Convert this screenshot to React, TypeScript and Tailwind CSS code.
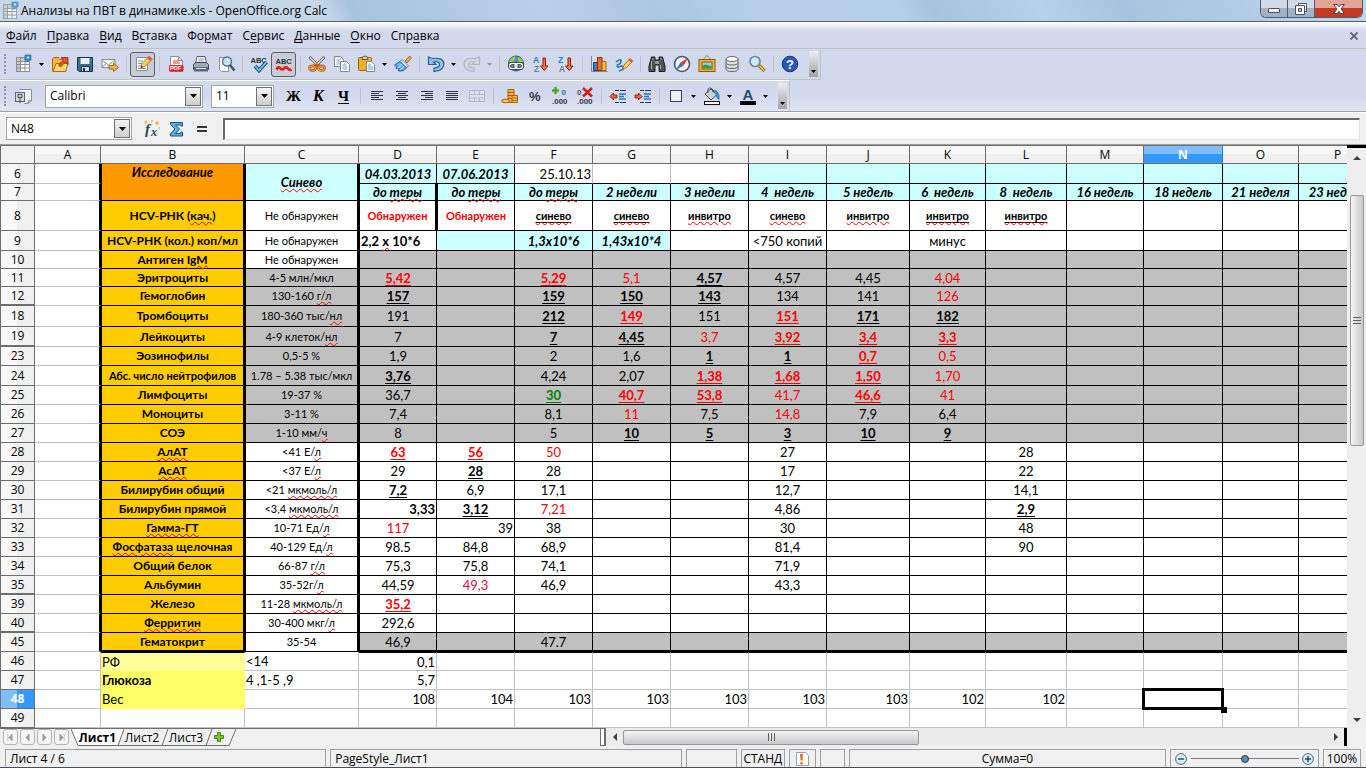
import { useState } from "react";
import type { ReactNode } from "react";
import clsx from "clsx";

const columns = [
  { name: "A", width: "w-[66px]" },
  { name: "B", width: "w-[144px]" },
  { name: "C", width: "w-[114px]" },
  { name: "D", width: "w-[78px]" },
  { name: "E", width: "w-[78px]" },
  { name: "F", width: "w-[78px]" },
  { name: "G", width: "w-[78px]" },
  { name: "H", width: "w-[78px]" },
  { name: "I", width: "w-[78px]" },
  { name: "J", width: "w-[83px]" },
  { name: "K", width: "w-[76px]" },
  { name: "L", width: "w-[81px]" },
  { name: "M", width: "w-[77px]" },
  { name: "N", width: "w-[79px]" },
  { name: "O", width: "w-[76px]" },
  { name: "P", width: "w-auto" },
];

type Row = {
  n: number;
  h: string;
  b?: string;
  c?: string;
  cells: string[];
};

// A cell is "flags|text": b bold, i italic, u underline, r red, m crimson, g green,
// s small, R right, L left. Words between ~ are marked by the spell checker.
const rows: Row[] = [
  { n: 6, h: "h-5", cells: ["bi|04.03.2013", "bi|07.06.2013", "R|25.10.13"] },
  {
    n: 7,
    h: "h-[17px]",
    cells: ["bi|до ~теры~", "bi|до ~теры~", "bi|до ~теры~", "bi|2 недели", "bi|3 недели", "bi|4  недель", "bi|5 недель", "bi|6  недель", "bi|8  недель", "bi|16 недель", "bi|18 недель", "bi|21 неделя", "bi|23 недель"],
  },
  {
    n: 8,
    h: "h-[30px]",
    b: "HCV-РНК (~кач.~)",
    c: "Не обнаружен",
    cells: ["brs|Обнаружен", "brs|Обнаружен", "bus|~синево~", "bus|~синево~", "bs|~инвитро~", "bs|~синево~", "bs|~инвитро~", "bus|~инвитро~", "bus|~инвитро~"],
  },
  { n: 9, h: "h-5", b: "HCV-РНК (кол.) коп/мл", c: "Не обнаружен", cells: ["bL|2,2 ~х~ 10*6", "", "bi|1,3х10*6", "bi|1,43х10*4", "", "|<750 копий", "", "|минус"] },
  { n: 10, h: "h-[18px]", b: "Антиген ~IgM~", c: "Не обнаружен", cells: [] },
  { n: 11, h: "h-[18px]", b: "Эритроциты", c: "4-5 млн/мкл", cells: ["bur|5,42", "", "bur|5,29", "r|5,1", "bu|4,57", "|4,57", "|4,45", "r|4,04"] },
  { n: 12, h: "h-[19px]", b: "Гемоглобин", c: "130-160 ~г/л~", cells: ["bu|157", "", "bu|159", "bu|150", "bu|143", "|134", "|141", "r|126"] },
  { n: 18, h: "h-[21px]", b: "Тромбоциты", c: "180-360 тыс/~нл~", cells: ["|191", "", "bu|212", "bur|149", "|151", "bur|151", "bu|171", "bu|182"] },
  { n: 19, h: "h-5", b: "Лейкоциты", c: "4-9 клеток/~нл~", cells: ["|7", "", "bu|7", "bu|4,45", "r|3,7", "bur|3,92", "bur|3,4", "bur|3,3"] },
  { n: 23, h: "h-[19px]", b: "Эозинофилы", c: "0,5-5 %", cells: ["|1,9", "", "|2", "|1,6", "bu|1", "bu|1", "bur|0,7", "r|0,5"] },
  { n: 24, h: "h-5", b: "Абс. число нейтрофилов", c: "1.78 – 5.38 тыс/мкл", cells: ["bu|3,76", "", "|4,24", "|2,07", "bur|1,38", "bur|1,68", "bur|1,50", "r|1,70"] },
  { n: 25, h: "h-[19px]", b: "Лимфоциты", c: "19-37 %", cells: ["|36,7", "", "bug|30", "bur|40,7", "bur|53,8", "r|41,7", "bur|46,6", "r|41"] },
  { n: 26, h: "h-[19px]", b: "Моноциты", c: "3-11 %", cells: ["|7,4", "", "|8,1", "r|11", "|7,5", "r|14,8", "|7,9", "|6,4"] },
  { n: 27, h: "h-[19px]", b: "СОЭ", c: "1-10 мм/~ч~", cells: ["|8", "", "|5", "bu|10", "bu|5", "bu|3", "bu|10", "bu|9"] },
  { n: 28, h: "h-[19px]", b: "~АлАТ~", c: "<41 Е/~л~", cells: ["bur|63", "bur|56", "r|50", "", "", "|27", "", "", "|28"] },
  { n: 29, h: "h-[19px]", b: "~АсАТ~", c: "<37 Е/~л~", cells: ["|29", "bu|28", "|28", "", "", "|17", "", "", "|22"] },
  { n: 30, h: "h-[19px]", b: "Билирубин общий", c: "<21 ~мкмоль/л~", cells: ["bu|7,2", "|6,9", "|17,1", "", "", "|12,7", "", "", "|14,1"] },
  { n: 31, h: "h-[19px]", b: "Билирубин прямой", c: "<3,4 ~мкмоль/л~", cells: ["bR|3,33", "bu|3,12", "r|7,21", "", "", "|4,86", "", "", "bu|2,9"] },
  { n: 32, h: "h-[19px]", b: "~Гамма-ГТ~", c: "10-71 Ед/~л~", cells: ["r|117", "R|39", "|38", "", "", "|30", "", "", "|48"] },
  { n: 33, h: "h-[19px]", b: "~Фосфатаза~ щелочная", c: "40-129 Ед/~л~", cells: ["|98.5", "|84,8", "|68,9", "", "", "|81,4", "", "", "|90"] },
  { n: 34, h: "h-[19px]", b: "Общий белок", c: "66-87 ~г/л~", cells: ["|75,3", "|75,8", "|74,1", "", "", "|71,9"] },
  { n: 35, h: "h-[19px]", b: "Альбумин", c: "35-52г/~л~", cells: ["|44,59", "m|49,3", "|46,9", "", "", "|43,3"] },
  { n: 39, h: "h-[19px]", b: "Железо", c: "11-28 ~мкмоль/л~", cells: ["bur|35,2"] },
  { n: 40, h: "h-[19px]", b: "~Ферритин~", c: "30-400 мкг/~л~", cells: ["|292,6"] },
  { n: 45, h: "h-[19px]", b: "Гематокрит", c: "35-54", cells: ["|46,9", "", "|47.7"] },
  { n: 46, h: "h-[19px]", b: "L|РФ", c: "L|<14", cells: ["R|0,1"] },
  { n: 47, h: "h-[19px]", b: "bL|Глюкоза", c: "L|4 ,1-5 ,9", cells: ["R|5,7"] },
  { n: 48, h: "h-[19px]", b: "L|Вес", c: "", cells: ["R|108", "R|104", "R|103", "R|103", "R|103", "R|103", "R|103", "R|102", "R|102"] },
  { n: 49, h: "h-[19px]", cells: [] },
];

// rows followed by hidden ones get a thicker header line
const beforeHidden = [12, 19, 35, 40];

const Marked = ({ text }: { text: string }) => (
  <>
    {text.split("~").map((part, i) =>
      i % 2 ? (
        <span key={i} className="underline decoration-[#ff0000] decoration-wavy decoration-1 underline-offset-1">
          {part}
        </span>
      ) : (
        part
      ),
    )}
  </>
);

const background = (n: number, col: number) => {
  if (col === 1) {
    if (n === 46) return "bg-[#ffff99]";
    if (n === 47 || n === 48) return "bg-[#ffff66]";
    if (n < 8) return "bg-[#ff9900]";
    if (n < 46) return "bg-[#ffcc00]";
  }
  if (col === 2) {
    if (n < 8) return "bg-[#ccffff]";
    return n > 10 && n < 28 ? "bg-[#c0c0c0]" : "bg-white";
  }
  if (col > 2) {
    if (n === 6) return col > 4 && col < 8 ? "bg-white" : "bg-[#ccffff]";
    if (n === 7 || (n === 9 && col > 3 && col < 7)) return "bg-[#ccffff]";
    if ((n > 9 && n < 28) || n === 45) return "bg-[#c0c0c0]";
  }
  return "bg-white";
};

const borders = (n: number, col: number) => {
  const black = "border-b-black border-l-black border-t-black";
  if (n > 45) {
    if (col === 1 && n < 49) return clsx("border-r border-b border-transparent", n === 46 && "border-t border-t-black");
    return clsx("border-r border-b border-[#c0c0c0]", n === 46 && col > 2 && "border-t border-t-black");
  }
  if (col === 0) return "border-b border-b-[#c0c0c0] border-r-2 border-r-black";
  const thickRight = col < 3 || (col === 3 && (n === 7 || n === 8));
  const thickLeft = col < 4 || (col === 4 && (n === 7 || n === 8));
  return clsx(
    black,
    n === 6 && (col === 5 || col === 6) ? "border-r-[#c0c0c0]" : "border-r-black",
    thickRight ? "border-r-2" : "border-r",
    thickLeft && "border-l",
    n === 45 && col !== 2 ? "border-b-2" : "border-b",
  );
};

const SheetCell = ({ value = "", n, col, rowSpan, selected, align = "align-middle" }: {
  value?: string;
  n: number;
  col: number;
  rowSpan?: number;
  selected?: boolean;
  align?: string;
}) => {
  const [flags, text] = value.includes("|") ? value.split("|") : ["", value];
  const has = (f: string) => flags.includes(f);
  const label = (col === 1 || col === 2) && n > 7 && n < 46;
  return (
    <td
      rowSpan={rowSpan}
      className={clsx(
        "p-0 whitespace-pre",
        align,
        background(n, col),
        borders(n, col),
        has("R") ? "pr-px text-right" : has("L") ? "pl-px text-left" : "text-center",
        (has("b") || (label && col === 1)) && "font-bold",
        has("i") && "italic",
        has("u") && "underline underline-offset-2",
        has("r") && "text-[#ff0000]",
        has("m") && "text-[#dd0844]",
        has("g") && "text-[#008000]",
        has("s") || (label && col === 2) || (n === 24 && col === 1) ? "text-[11px]" : label ? "text-[12px]" : "text-[13px]",
        selected && "relative",
      )}
    >
      <Marked text={text} />
      {selected && (
        <>
          <span className="absolute -inset-0.5 border-3 border-black" />
          <span className="absolute -right-[5px] -bottom-[5px] size-1.5 bg-black" />
        </>
      )}
    </td>
  );
};

const Sheet = () => {
  const [active, setActive] = useState({ n: 48, col: 13 });
  return (
    <table
      className="w-full min-w-[1377px] table-fixed border-separate border-spacing-0 font-[Lato,Carlito,sans-serif] leading-4 text-black"
      onClick={(e) => {
        const cell = (e.target as HTMLElement).closest("td");
        const n = Number(cell?.parentElement?.dataset.row);
        if (cell && n > 7) setActive({ n, col: cell.cellIndex - 1 });
      }}
    >
      <colgroup>
        <col className="w-[35px]" />
        {columns.map((c) => (
          <col key={c.name} className={c.width} />
        ))}
      </colgroup>
      <thead className="font-['Open_Sans',sans-serif] text-[12px]">
        <tr className="h-[19px]">
          <th className="border border-[#6e6e6e] bg-[#f3f3f3] p-0" />
          {columns.map((c, i) => (
            <th
              key={c.name}
              scope="col"
              className={clsx(
                "border-y border-r p-0",
                i === active.col
                  ? "border-x-[#1c7ae0] border-y-[#6e6e6e] bg-linear-to-b from-[#80bdff] from-50% to-[#3399ff] to-50% font-bold text-white"
                  : "border-[#6e6e6e] bg-linear-to-b from-[#f8f8f8] from-50% to-[#f0f0f0] to-50% font-normal",
              )}
            >
              {c.name}
            </th>
          ))}
        </tr>
      </thead>
      <tbody>
        {rows.map((row) => (
          <tr key={row.n} data-row={row.n} className={row.h}>
            <th
              scope="row"
              className={clsx(
                "border-x border-[#6e6e6e] p-0 font-['Open_Sans',sans-serif] text-[12px]",
                beforeHidden.includes(row.n) ? "border-b-2" : "border-b",
                row.n === active.n
                  ? "bg-linear-to-r from-[#80bdff] from-50% to-[#3399ff] to-50% font-bold text-white"
                  : "bg-linear-to-r from-[#f8f8f8] from-50% to-[#f0f0f0] to-50% font-normal",
              )}
            >
              {row.n}
            </th>
            <SheetCell n={row.n} col={0} />
            {row.n === 6 && (
              <>
                <SheetCell n={6} col={1} rowSpan={2} value="bi|Исследование" align="align-top" />
                <SheetCell n={6} col={2} rowSpan={2} value="bi|~Синево~" />
              </>
            )}
            {row.n > 7 && (
              <>
                <SheetCell n={row.n} col={1} value={row.b} selected={active.n === row.n && active.col === 1} />
                <SheetCell n={row.n} col={2} value={row.c} selected={active.n === row.n && active.col === 2} />
              </>
            )}
            {columns.slice(3).map((c, i) => (
              <SheetCell
                key={c.name}
                n={row.n}
                col={i + 3}
                value={row.cells[i]}
                selected={active.n === row.n && active.col === i + 3}
              />
            ))}
          </tr>
        ))}
      </tbody>
    </table>
  );
};

/* ---------- icons, drawn on a 20x20 field ---------- */

const Svg = ({ children }: { children: ReactNode }) => (
  <svg viewBox="0 0 20 20" className="size-5 shrink-0" fill="none" aria-hidden="true">
    {children}
  </svg>
);

const SvgText = ({ x, y, size, fill, children }: { x: number; y: number; size: number; fill: string; children: string }) => (
  <text x={x} y={y} fontSize={size} fill={fill} fontFamily="Liberation Sans, sans-serif" fontWeight="bold">
    {children}
  </text>
);

const GridIcon = () => (
  <Svg>
    <rect x="2.500" y="3.500" width="13" height="14" fill="#fff" stroke="#8d8d8d" />
    <path d="M3 4h12v3H3zM3 7h3v10H3z" fill="#c4c9ce" />
    <path d="M2.500 7.500h13M2.500 10.500h13M2.500 14h13M6.500 3.500v14M11 3.500v14" stroke="#8d8d8d" />
    <path d="M11 1h6v5h-2l-2 2.500V6h-2z" fill="#3d8fd1" stroke="#1c68a8" strokeWidth=".7" />
    <circle cx="14" cy="3.500" r="1" fill="#fff" />
  </Svg>
);

const OpenIcon = () => (
  <Svg>
    <path d="M2.500 17V4.500l1-1h5l1 2H16V17z" fill="#f5b73c" stroke="#b3661a" />
    <path d="M3 17.500 6 9.500h12l-2.500 8z" fill="#ffdf75" stroke="#b3661a" />
    <path d="m8.500 11 5-5L11 3.500h7v7L15.500 8l-5 5z" fill="#e4572a" stroke="#8e1f0c" strokeWidth=".8" />
  </Svg>
);

const SaveIcon = () => (
  <Svg>
    <path d="M2.500 3.500h15v14H4l-1.500-1.500z" fill="#39708f" stroke="#153447" />
    <path d="M5.500 4h9v6h-9z" fill="#e9f0f4" />
    <path d="M6.500 12.500h8v5h-8z" fill="#cfd9df" stroke="#153447" />
    <path d="M8 14h2v3H8z" fill="#153447" />
  </Svg>
);

const MailIcon = () => (
  <Svg>
    <path d="M2 5.500h13v8H2z" fill="#f7f7f7" stroke="#8b8f94" />
    <path d="m2 6 6.500 5L15 6M2 13l4.500-3.500" stroke="#8b8f94" />
    <path d="M9 11.500h4.500V9l5 4.500-5 4V15H9z" fill="#f7b53b" stroke="#9a5f10" strokeWidth=".9" />
  </Svg>
);

const EditIcon = () => (
  <Svg>
    <path d="M3.500 3.500h11v13h-11z" fill="#fff" stroke="#8b8f94" />
    <path d="M5 7h5M5 9.500h4M5 12h3M5 14.500h8" stroke="#5f8fb0" />
    <path d="m8 13.500 1-4 7-7 3 3-7 7z" fill="#ffd54a" stroke="#a6651a" strokeWidth=".9" />
    <path d="m14 4.500 2.500-2.500 2.500 3-2 2z" fill="#e8544a" />
    <path d="m8 13.500.5-2 1.500 1.500z" fill="#222" />
  </Svg>
);

const PdfIcon = () => (
  <Svg>
    <path d="M4.500 2.500h8l4 4v11h-12z" fill="#fff" stroke="#8b8f94" />
    <path d="M12.500 2.500v4h4" stroke="#8b8f94" />
    <path d="M7 7h6M7 9h7" stroke="#d23b36" />
    <rect x="3" y="11" width="14.500" height="6.500" rx="1" fill="#dd2420" />
    <SvgText x={4} y={16.300} size={5.800} fill="#fff">PDF</SvgText>
  </Svg>
);

const PrintIcon = () => (
  <Svg>
    <path d="M6 2.500h8l1.500 7H4.500z" fill="#fff" stroke="#4f5f6b" />
    <path d="M7 5h6M7 7h6" stroke="#90a0ac" />
    <path d="M2.500 10.500 4.500 8.500h11l2 2v5h-15z" fill="#9fabb5" stroke="#3c4a55" />
    <path d="M3 13h14v4.500H3z" fill="#5c6a75" />
    <path d="M5 14.500h10" stroke="#dfe6eb" />
  </Svg>
);

const PreviewIcon = () => (
  <Svg>
    <path d="M3.500 3.500h9v14h-7l-2-2z" fill="#fff" stroke="#8b8f94" />
    <circle cx="11" cy="7.500" r="4.500" fill="#cbe4f6" stroke="#56788e" strokeWidth="1.500" />
    <path d="m14 11 4.500 5.500" stroke="#3b5566" strokeWidth="2.500" />
  </Svg>
);

const SpellIcon = () => (
  <Svg>
    <SvgText x={1.500} y={8.500} size={7.500} fill="#26343d">ABC</SvgText>
    <path d="m6 12 4 4.500L17.500 8" stroke="#1b4f80" strokeWidth="3.800" />
    <path d="m6 12 4 4.500L17.500 8" stroke="#7cc0f2" strokeWidth="1.800" />
  </Svg>
);

const AutoSpellIcon = () => (
  <Svg>
    <SvgText x={1.500} y={10} size={7.500} fill="#26343d">ABC</SvgText>
    <path d="M2.500 15.500q1.800-3.500 3.800-1.200t3.700 0 3.700 0 3.800 1.200" stroke="#e0231c" strokeWidth="2.800" />
  </Svg>
);

const CutIcon = () => (
  <Svg>
    <path d="m2.500 3 9.500 9.500M17.500 3 8 12.500" stroke="#555" strokeWidth="2.600" />
    <path d="m3 3.500 8.500 8.500M17 3.500 8.500 12" stroke="#e4e4e4" strokeWidth="1.200" />
    <path d="m10 10.500-3.500 2M10 10.500l3.500 2" stroke="#c75a12" strokeWidth="3" />
    <ellipse cx="5.500" cy="14.200" rx="3" ry="2.300" stroke="#b9500d" strokeWidth="2.600" />
    <ellipse cx="14.500" cy="14.200" rx="3" ry="2.300" stroke="#b9500d" strokeWidth="2.600" />
    <ellipse cx="5.500" cy="14.200" rx="3" ry="2.300" stroke="#f39a34" strokeWidth="1.200" />
    <ellipse cx="14.500" cy="14.200" rx="3" ry="2.300" stroke="#f39a34" strokeWidth="1.200" />
  </Svg>
);

const CopyIcon = () => (
  <Svg>
    <path d="M2.500 2.500h6l3 3v7h-9z" fill="#fff" stroke="#7c8790" />
    <path d="M4.500 6h4M4.500 8h5M4.500 10h5" stroke="#6e9fc4" />
    <path d="M8.500 7.500h6l3 3v7h-9z" fill="#fff" stroke="#7c8790" />
    <path d="M10.500 11h4M10.500 13h5M10.500 15h5" stroke="#6e9fc4" />
  </Svg>
);

const PasteIcon = () => (
  <Svg>
    <rect x="1.500" y="3.500" width="13" height="13" rx="1" fill="#eeb02a" stroke="#9c6412" />
    <path d="M5 5.500q0-3.500 3-3.500t3 3.500z" fill="#d9d3b8" stroke="#6b5a2a" />
    <path d="M9.500 7.500h5l3 3v7h-8z" fill="#fff" stroke="#7c8790" />
    <path d="M11 11h3M11 13h5M11 15h5" stroke="#6e9fc4" />
  </Svg>
);

const BrushIcon = () => (
  <Svg>
    <path d="m12 7 4.500-5 2 2L14 9z" fill="#f3a64a" stroke="#94571a" strokeWidth=".8" />
    <path d="m9 5.500 6.500 6.500-2 2L7 7.500z" fill="#d7ebf8" stroke="#3d6b8c" strokeWidth=".8" />
    <path d="M7 7.500 1.500 11q1 1.500 2.500 1l-1 2.500q1.500.5 3 0L5.500 17q5 1 8-3z" fill="#6bb1ea" stroke="#1f5f9c" strokeWidth=".9" />
    <path d="M9 10 4.500 14M11 12l-3.500 3.500" stroke="#dff0fc" strokeWidth=".8" />
  </Svg>
);

const UndoIcon = ({ faded }: { faded?: boolean }) => (
  <Svg>
    <g transform={faded ? "translate(20 0) scale(-1 1)" : undefined}>
      <path
        d="M2.500 3v7.500H10L7.500 8q5-1.500 6 2 .5 3.500-5.500 4v3.500q9.500-.5 10-7.500-.8-7-10.500-5.500L5 4z"
        fill={faded ? "#d3d7e2" : "#8cc0e0"}
        stroke={faded ? "#b2b6c2" : "#2b6285"}
        strokeWidth="1.200"
      />
    </g>
  </Svg>
);

const LinkIcon = () => (
  <Svg>
    <circle cx="10" cy="9.500" r="7.500" fill="#4b93cc" stroke="#235b85" />
    <path d="M3.500 7q2.500-5 6-4.500l-.5 3-3 3-2.500.5zM12 3q4 1 5 5l-3 1-2-3z" fill="#a5c93a" />
    <rect x="3.500" y="9.500" width="7.500" height="5" rx="2.500" stroke="#222" strokeWidth="2.800" />
    <rect x="9" y="9.500" width="7.500" height="5" rx="2.500" stroke="#222" strokeWidth="2.800" />
    <rect x="3.500" y="9.500" width="7.500" height="5" rx="2.500" stroke="#f4f4f4" strokeWidth="1.400" />
    <rect x="9" y="9.500" width="7.500" height="5" rx="2.500" stroke="#f4f4f4" strokeWidth="1.400" />
  </Svg>
);

const SortIcon = ({ top, bottom }: { top: string; bottom: string }) => (
  <Svg>
    <SvgText x={2} y={8.500} size={8.500} fill="#1f7fd0">{top}</SvgText>
    <SvgText x={3} y={17.500} size={8.500} fill="#7a7f84">{bottom}</SvgText>
    <path d="M12 4h2.500v8H17l-3.700 4.500L9.500 12H12z" fill="#f5793f" stroke="#8e1f0c" />
  </Svg>
);

const ChartIcon = () => (
  <Svg>
    <path d="M2.500 2v15.500h16" stroke="#7c8790" />
    <path d="M4.500 8.500h4v8h-4z" fill="#3d84b8" stroke="#1d4768" />
    <path d="M8.500 3.500h4.500v13H8.500z" fill="#f06a2a" stroke="#94270c" />
    <path d="M13 7.500h4v9h-4z" fill="#f8c04a" stroke="#a0680f" />
  </Svg>
);

const DrawIcon = () => (
  <Svg>
    <path d="M2 8q5-4 5-1T3.500 11Q2 14 6 12.500T9 15.500L5 17" stroke="#2f77c0" strokeWidth="1.600" />
    <path d="m8.500 15 1.500-4 5.500-6 3 2.500-6 6z" fill="#ffd54a" stroke="#a6651a" strokeWidth=".9" />
    <path d="m14.500 6 1.500-2 3 2.500-1.500 2z" fill="#e8544a" />
  </Svg>
);

const FindIcon = () => (
  <Svg>
    <path d="M4.500 3h3.500v3h4V3h3.500l2.500 9v5.500h-6V11H8v6.500H2V12z" fill="#4c5257" stroke="#1c1f22" />
    <path d="M8 7h4v3H8z" fill="#999" />
    <path d="M4.500 7v8M13.500 11v4M6 4v2M14 4v2" stroke="#a9afb4" />
  </Svg>
);

const CompassIcon = () => (
  <Svg>
    <circle cx="10" cy="10" r="7.500" fill="#f4f6f8" stroke="#4a5862" strokeWidth="1.600" />
    <path d="m4.500 4 7 4.500-3 3z" fill="#2e6fc4" opacity="0" />
    <path d="m16 4-4.500 7.500L8.500 8.500z" fill="#e13329" />
    <path d="m4 16 4.500-7.500 3 3z" fill="#2e6fc4" />
  </Svg>
);

const GalleryIcon = () => (
  <Svg>
    <path d="m6 5.500 4-4 4 4" stroke="#9a7a3c" />
    <rect x="2" y="5.500" width="16" height="12" fill="#f1b03c" stroke="#8d5a10" />
    <rect x="5" y="8" width="10" height="7" fill="#8fd0f2" stroke="#8d5a10" />
    <path d="M5.500 14.500v-3q4-2 9 1v2z" fill="#3f9a3d" />
  </Svg>
);

const DatabaseIcon = () => (
  <Svg>
    <path d="M4 5v10q0 2.500 6 2.500t6-2.500V5" fill="#dcdfe1" stroke="#63696f" />
    <ellipse cx="10" cy="5" rx="6" ry="2.500" fill="#fafafa" stroke="#63696f" />
    <path d="M4 8.500q0 2.500 6 2.500t6-2.500M4 12q0 2.500 6 2.500t6-2.500" stroke="#63696f" />
  </Svg>
);

const ZoomIcon = () => (
  <Svg>
    <circle cx="8" cy="7.500" r="5" fill="#cfe9fa" stroke="#6b8aa0" strokeWidth="1.700" />
    <path d="m12 11.500 5.500 5.500" stroke="#9a6a16" strokeWidth="3.400" />
    <path d="m12.500 12 4.500 4.500" stroke="#f3c548" strokeWidth="1.600" />
  </Svg>
);

const HelpIcon = () => (
  <Svg>
    <circle cx="10" cy="10" r="7.800" fill="#2a58b5" stroke="#1a3878" />
    <SvgText x={6} y={14.800} size={13} fill="#fff">?</SvgText>
  </Svg>
);

const StylesIcon = () => (
  <Svg>
    <path d="M5.500 3.500h12v11l-3 3h-4" fill="#f3f4f6" stroke="#8b8f94" />
    <path d="M14.500 17.500v-3h3" stroke="#8b8f94" />
    <rect x="1.500" y="6.500" width="9" height="9" fill="#d6dade" stroke="#5d666e" />
    <path d="M4 8.500h4v3H4zM6 11.500V17" stroke="#3a444c" />
  </Svg>
);

const LinesIcon = ({ d }: { d: string }) => (
  <Svg>
    <path d={d} stroke="#2b3840" strokeWidth="1" />
  </Svg>
);

const MergeIcon = () => (
  <Svg>
    <path d="M2.500 4.500h15v11h-15zM2.500 8.500h15M2.500 12h15M7.500 4.500v4M12.500 4.500v4M7.500 12v3.500M12.500 12v3.500" stroke="#b4b9c4" fill="#dde1ec" />
  </Svg>
);

const CoinsIcon = () => (
  <Svg>
    <path d="M8 3.500h6v13H8z" fill="#f5b53a" stroke="#a9600c" />
    <path d="M8 6.500h6M8 9.500h6M8 12.500h6" stroke="#a9600c" />
    <path d="M12 9.500h5.500v7H12z" fill="#f8c55a" stroke="#a9600c" />
    <path d="M12 12h5.500M12 14.500h5.500" stroke="#a9600c" />
    <ellipse cx="5.500" cy="15" rx="4" ry="1.800" fill="#f8c55a" stroke="#a9600c" />
  </Svg>
);

const PercentIcon = () => (
  <Svg>
    <SvgText x={4} y={14.500} size={13} fill="#2e3c46">%</SvgText>
  </Svg>
);

const DecimalIcon = ({ remove }: { remove?: boolean }) => (
  <Svg>
    <SvgText x={remove ? 2 : 11.500} y={8.500} size={8} fill={remove ? "#4c5a64" : "#2376c8"}>0</SvgText>
    <SvgText x={2} y={18} size={8} fill="#2e3c46">.000</SvgText>
    {remove ? (
      <path d="m8 2 9 8.500M17 2l-9 8.500" stroke="#d3201b" strokeWidth="2.600" />
    ) : (
      <path d="M5.500 1v7M2 4.500h7" stroke="#4ea81c" strokeWidth="2.400" />
    )}
  </Svg>
);

const IndentIcon = ({ more }: { more?: boolean }) => (
  <Svg>
    <path d="M7 4.500h4m1 0h6M7 16.500h4m1 0h6" stroke="#2b3840" />
    <path d="M11 8h7M11 10.500h5M11 13h7" stroke="#2479ba" strokeWidth="1.700" />
    <path d={more ? "M9 10.500 5.500 7v2H2v3h3.500v2z" : "M2 10.500 5.500 7v2H9v3H5.500v2z"} fill="#f0643c" stroke="#8e1f0c" strokeWidth=".9" />
  </Svg>
);

const BorderIcon = () => (
  <Svg>
    <rect x="4.500" y="4.500" width="11" height="11" fill="#eef0f8" stroke="#3a444c" />
  </Svg>
);

const BucketIcon = () => (
  <Svg>
    <path d="m3 8 6-5 6 5.500-6 5.500z" fill="#cdd4d9" stroke="#3f4a52" />
    <path d="M6 7q-1-5.500 3-5 2 .500 2 4.500" stroke="#3f4a52" />
    <path d="M11 4.500q7-.5 6 9-2.500-1-3-5z" fill="#3d9ad8" stroke="#1d6494" strokeWidth=".7" />
    <rect x="2.500" y="15.500" width="15" height="3" fill="#fff" stroke="#111" />
  </Svg>
);

const FontColorIcon = () => (
  <Svg>
    <SvgText x={4.500} y={13.500} size={15} fill="#1e4d70">A</SvgText>
    <rect x="2" y="15" width="16" height="4" fill="#000" />
  </Svg>
);

const FunctionIcon = () => (
  <Svg>
    <text x="3" y="15" fontSize="15" fontStyle="italic" fontWeight="bold" fontFamily="Liberation Serif, serif" fill="#2d4656">f</text>
    <text x="9" y="16.500" fontSize="12" fontStyle="italic" fontWeight="bold" fontFamily="Liberation Serif, serif" fill="#2d4656">x</text>
    <path d="M4 1.500v3M2.500 3h3M15 2v4M13 4h4M10 1v2M17 8v2" stroke="#f0b92c" strokeWidth="1.300" />
  </Svg>
);

const SumIcon = () => (
  <Svg>
    <path d="M3.500 3.500h12v3.500H14L13.500 6H8.500l4 4-4 4.500h5l.5-1.500h1.500v4h-12v-2L8 10 3.500 5.500z" fill="#5eb0e4" stroke="#135683" />
  </Svg>
);

const DocAlertIcon = () => (
  <Svg>
    <path d="M4.500 3.500h9l3 3v10h-12z" fill="#fff" stroke="#9aa0a6" />
    <path d="M8 5h3l-.5 6.500h-2zM8.300 13h2.400v2.400H8.300z" fill="#e8721c" />
  </Svg>
);

/* ---------- chrome ---------- */

const ToolButton = ({ label, pressed, children }: { label: string; pressed?: boolean; children: ReactNode }) => (
  <button
    type="button"
    aria-label={label}
    aria-pressed={pressed}
    className={clsx(
      "flex h-[25px] w-[25px] shrink-0 items-center justify-center rounded-[3px]",
      pressed && "border border-[#5b5f68] bg-[#c9cbd6]",
    )}>
    {children}
  </button>
);

const Caret = ({ faded }: { faded?: boolean }) => (
  <svg viewBox="0 0 5 3" className={clsx("h-[3px] w-[5px] shrink-0", faded ? "fill-[#9a9aa0]" : "fill-black")} aria-hidden="true">
    <path d="M0 0h5L2.500 3z" />
  </svg>
);

const DropButton = ({ label, faded }: { label: string; faded?: boolean }) => (
  <button type="button" aria-label={label} className="flex h-[25px] w-[11px] shrink-0 items-center justify-center">
    <Caret faded={faded} />
  </button>
);

const Separator = () => (
  <div className="flex w-2 shrink-0 justify-center">
    <div className="h-4 w-px bg-[#bfc0c6]" />
  </div>
);

const Grip = () => <div className="mr-[5px] ml-1 h-5 w-0.5 shrink-0 border-l-2 border-dotted border-[#8f93a3]" />;

const OverflowHandle = () => (
  <button
    type="button"
    aria-label="Ещё"
    className="ml-[7px] flex h-[26px] w-[9px] shrink-0 items-end justify-center bg-linear-to-b from-[#eceef5] to-[#a3a3a6] pb-1"
  >
    <Caret />
  </button>
);

const ComboBox = ({ label, value, className }: { label: string; value: string; className: string }) => (
  <div className={clsx("flex h-[23px] shrink-0 items-center border border-[#a0a3ad] bg-white p-px", className)}>
    <input aria-label={label} defaultValue={value} className="min-w-0 flex-1 bg-transparent pl-[3px] text-[12px] outline-none" />
    <button
      type="button"
      aria-label={`${label}: список`}
      className="flex h-[19px] w-4 shrink-0 items-center justify-center border border-[#707070] bg-linear-to-b from-[#f2f2f2] to-[#cfcfcf]"
    >
      <svg viewBox="0 0 7 4" className="h-1 w-[7px] fill-black" aria-hidden="true">
        <path d="M0 0h7L3.500 4z" />
      </svg>
    </button>
  </div>
);

const TitleBar = () => (
  <header className="flex h-[22px] shrink-0 items-start justify-between border-b border-[#56606e] bg-[linear-gradient(60deg,#c9d8e8_0%,#c5d6e9_24%,#a9c3de_26%,#b9d0e8_40%,#adc6e1_48%,#b7d0e8_56%,#b6cfe8_66%,#a9c2dd_68%,#b8d1ea_76%,#a8c3df_82%,#c0d6ec_100%)]">
    <div className="flex items-center pl-px">
      <span className="opacity-70">
        <GridIcon />
      </span>
      <h1 className="text-[12px] leading-[22px] whitespace-nowrap">Анализы на ПВТ в динамике.xls - OpenOffice.org Calc</h1>
    </div>
    <div className="mr-[3px] flex h-[18px] overflow-hidden rounded-b-md border border-t-0 border-[#4d5b6b]">
      <button type="button" aria-label="Свернуть" className="flex w-[27px] items-center justify-center border-r border-[#4d5b6b] bg-linear-to-b from-[#cfdbe8] from-45% to-[#a2b1c4] to-50%">
        <span className="mt-1 h-[5px] w-3 rounded-[1px] border border-[#4a5364] bg-white" />
      </button>
      <button type="button" aria-label="Восстановить" className="flex w-[27px] items-center justify-center border-r border-[#4d5b6b] bg-linear-to-b from-[#cfdbe8] from-45% to-[#a2b1c4] to-50%">
        <svg viewBox="0 0 12 12" className="size-3" fill="#fff" stroke="#4a5364" aria-hidden="true">
          <path d="M3.500.500h8v8h-8z" />
          <path d="M.500 2.500h9v9h-9z" />
          <path d="M3.500 5.500h3v3h-3z" fill="#b5c2d2" />
        </svg>
      </button>
      <button type="button" aria-label="Закрыть" className="flex w-[47px] items-center justify-center bg-linear-to-b from-[#e3a597] from-45% to-[#c4391f] to-50%">
        <svg viewBox="0 0 12 10" className="h-2.5 w-3" aria-hidden="true">
          <path d="M.700.500h3.600L6 2.800 7.700.500h3.600L8 5l3.300 4.500H7.700L6 7.200 4.300 9.500H.700L4 5z" fill="#fff" stroke="#4a4450" />
        </svg>
      </button>
    </div>
  </header>
);

const menus = [
  ["", "Ф", "айл"],
  ["", "П", "равка"],
  ["", "В", "ид"],
  ["В", "с", "тавка"],
  ["Фо", "р", "мат"],
  ["С", "е", "рвис"],
  ["", "Д", "анные"],
  ["", "О", "кно"],
  ["Спр", "а", "вка"],
];

const MenuBar = () => (
  <nav className="flex h-[27px] shrink-0 items-center border-b border-[#c3c2bf] bg-linear-to-b from-white to-[#d3d9ec] to-35% pt-0.5 pl-px">
    {menus.map(([before, key, after]) => (
      <button key={before + key + after} type="button" className="px-[5px] text-[12px] leading-5">
        {before}
        <span className="underline underline-offset-2">{key}</span>
        {after}
      </button>
    ))}
    <button type="button" aria-label="Закрыть документ" className="mr-2 ml-auto">
      <svg viewBox="0 0 8 8" className="size-2" stroke="#59616e" strokeWidth="1.800" aria-hidden="true">
        <path d="m.500.500 7 7M7.500.500l-7 7" />
      </svg>
    </button>
  </nav>
);

const StandardToolbar = () => (
  <div className="flex h-[31px] w-[821px] items-center border-r border-b border-[#c3c2bf] border-t-white">
    <Grip />
    <ToolButton label="Создать"><GridIcon /></ToolButton>
    <DropButton label="Создать: список" />
    <ToolButton label="Открыть"><OpenIcon /></ToolButton>
    <ToolButton label="Сохранить"><SaveIcon /></ToolButton>
    <ToolButton label="Отправить по почте"><MailIcon /></ToolButton>
    <Separator />
    <ToolButton label="Правка файла" pressed><EditIcon /></ToolButton>
    <Separator />
    <ToolButton label="Экспорт в PDF"><PdfIcon /></ToolButton>
    <ToolButton label="Печать"><PrintIcon /></ToolButton>
    <ToolButton label="Предварительный просмотр"><PreviewIcon /></ToolButton>
    <Separator />
    <ToolButton label="Проверка орфографии"><SpellIcon /></ToolButton>
    <ToolButton label="Автопроверка орфографии" pressed><AutoSpellIcon /></ToolButton>
    <Separator />
    <ToolButton label="Вырезать"><CutIcon /></ToolButton>
    <ToolButton label="Копировать"><CopyIcon /></ToolButton>
    <ToolButton label="Вставить"><PasteIcon /></ToolButton>
    <DropButton label="Вставить: список" />
    <ToolButton label="Кисть форматирования"><BrushIcon /></ToolButton>
    <Separator />
    <ToolButton label="Отменить"><UndoIcon /></ToolButton>
    <DropButton label="Отменить: список" />
    <ToolButton label="Вернуть"><UndoIcon faded /></ToolButton>
    <DropButton label="Вернуть: список" faded />
    <Separator />
    <ToolButton label="Гиперссылка"><LinkIcon /></ToolButton>
    <ToolButton label="Сортировать по возрастанию"><SortIcon top="A" bottom="Z" /></ToolButton>
    <ToolButton label="Сортировать по убыванию"><SortIcon top="Z" bottom="A" /></ToolButton>
    <Separator />
    <ToolButton label="Диаграмма"><ChartIcon /></ToolButton>
    <ToolButton label="Функции рисования"><DrawIcon /></ToolButton>
    <Separator />
    <ToolButton label="Найти и заменить"><FindIcon /></ToolButton>
    <ToolButton label="Навигатор"><CompassIcon /></ToolButton>
    <ToolButton label="Галерея"><GalleryIcon /></ToolButton>
    <ToolButton label="Источники данных"><DatabaseIcon /></ToolButton>
    <ToolButton label="Масштаб"><ZoomIcon /></ToolButton>
    <Separator />
    <ToolButton label="Справка"><HelpIcon /></ToolButton>
    <OverflowHandle />
  </div>
);

const FormattingToolbar = () => (
  <div className="flex h-[31px] w-[790px] items-center border-t border-r border-[#c3c2bf] border-t-white">
    <Grip />
    <ToolButton label="Стили"><StylesIcon /></ToolButton>
    <ComboBox label="Шрифт" value="Calibri" className="ml-[9px] w-[158px]" />
    <ComboBox label="Размер" value="11" className="mr-[7px] ml-2 w-[63px]" />
    <ToolButton label="Жирный"><span className="font-['Liberation_Serif',serif] text-[15px] font-bold">Ж</span></ToolButton>
    <ToolButton label="Курсив"><span className="font-['Liberation_Serif',serif] text-[16px] font-bold italic">К</span></ToolButton>
    <ToolButton label="Подчёркнутый"><span className="font-['Liberation_Serif',serif] text-[15px] font-bold underline underline-offset-2">Ч</span></ToolButton>
    <Separator />
    <ToolButton label="По левому краю"><LinesIcon d="M4 5.500h12M4 7.500h8M4 9.500h12M4 11.500h8M4 13.500h12" /></ToolButton>
    <ToolButton label="По центру"><LinesIcon d="M4 5.500h12M6 7.500h8M4 9.500h12M6 11.500h8M4 13.500h12" /></ToolButton>
    <ToolButton label="По правому краю"><LinesIcon d="M4 5.500h12M8 7.500h8M4 9.500h12M8 11.500h8M4 13.500h12" /></ToolButton>
    <ToolButton label="По ширине"><LinesIcon d="M4 5.500h12M4 7.500h12M4 9.500h12M4 11.500h12M4 13.500h12" /></ToolButton>
    <ToolButton label="Объединить ячейки"><MergeIcon /></ToolButton>
    <Separator />
    <ToolButton label="Денежный формат"><CoinsIcon /></ToolButton>
    <ToolButton label="Процентный формат"><PercentIcon /></ToolButton>
    <ToolButton label="Добавить разряд"><DecimalIcon /></ToolButton>
    <ToolButton label="Удалить разряд"><DecimalIcon remove /></ToolButton>
    <Separator />
    <ToolButton label="Уменьшить отступ"><IndentIcon /></ToolButton>
    <ToolButton label="Увеличить отступ"><IndentIcon more /></ToolButton>
    <Separator />
    <ToolButton label="Обрамление"><BorderIcon /></ToolButton>
    <DropButton label="Обрамление: список" />
    <ToolButton label="Цвет фона"><BucketIcon /></ToolButton>
    <DropButton label="Цвет фона: список" />
    <ToolButton label="Цвет шрифта"><FontColorIcon /></ToolButton>
    <DropButton label="Цвет шрифта: список" />
    <OverflowHandle />
  </div>
);

const FormulaBar = () => (
  <div className="flex h-[33px] shrink-0 items-center border-t border-b border-[#a0a0a0] border-t-white bg-[#f0f0f0] px-1.5">
    <ComboBox label="Область листа" value="N48" className="mr-[7px] w-[126px]" />
    <ToolButton label="Мастер функций"><FunctionIcon /></ToolButton>
    <ToolButton label="Сумма"><SumIcon /></ToolButton>
    <ToolButton label="Функция"><LinesIcon d="M5 7.500h10M5 8.500h10M5 11.500h10M5 12.500h10" /></ToolButton>
    <input
      aria-label="Строка ввода"
      className="ml-[9px] h-[22px] min-w-0 flex-1 border border-t-2 border-l-2 border-[#e3e3e3] border-t-[#696969] border-l-[#696969] bg-white px-1 text-[12px] outline-none"
    />
  </div>
);

const Arrow = ({ d }: { d: string }) => (
  <svg viewBox="0 0 8 8" className="size-2 fill-[#404040]" aria-hidden="true">
    <path d={d} />
  </svg>
);

const VerticalScroll = () => (
  <div className="flex w-[19px] shrink-0 flex-col items-center border-t-3 border-black bg-[#eeeeee]">
    <button type="button" aria-label="Вверх" className="flex h-[47px] w-full items-start justify-center pt-1.5">
      <Arrow d="M0 6l4-4 4 4z" />
    </button>
    <div className="flex h-[251px] w-3.5 flex-col items-center justify-center gap-0.5 rounded-xs border border-[#979797] bg-linear-to-r from-[#f5f5f5] to-[#c8c8cc]">
      <span className="h-px w-2 bg-[#606060]" />
      <span className="h-px w-2 bg-[#606060]" />
      <span className="h-px w-2 bg-[#606060]" />
    </div>
    <button type="button" aria-label="Вниз" className="mt-auto flex h-4 w-full items-center justify-center">
      <Arrow d="M0 2l4 4 4-4z" />
    </button>
  </div>
);

const HorizontalScroll = () => (
  <div className="flex min-w-0 flex-1 items-center bg-[#ececec]">
    <button type="button" aria-label="Влево" className="flex w-[17px] justify-center">
      <Arrow d="M6 0L2 4l4 4z" />
    </button>
    <div className="flex h-[15px] w-[40%] items-center justify-center gap-0.5 rounded-xs border border-[#979797] bg-linear-to-b from-[#f5f5f5] to-[#c8c8cc]">
      <span className="h-2 w-px bg-[#606060]" />
      <span className="h-2 w-px bg-[#606060]" />
      <span className="h-2 w-px bg-[#606060]" />
    </div>
    <button type="button" aria-label="Вправо" className="ml-auto flex w-[17px] justify-center">
      <Arrow d="M2 0l4 4-4 4z" />
    </button>
    <div className="w-[3px] self-stretch bg-black" />
  </div>
);

const navButtons = [
  { label: "Первый лист", d: "M1 0v8M2 4l4-4v8z" },
  { label: "Предыдущий лист", d: "M2 4l4-4v8z" },
  { label: "Следующий лист", d: "M6 4L2 0v8z" },
  { label: "Последний лист", d: "M6 4L2 0v8zM7 0v8" },
];

const SheetTab = ({ name, active, onClick }: { name: string; active: boolean; onClick: () => void }) => (
  <button
    type="button"
    onClick={onClick}
    className={clsx("relative h-[17px] shrink-0 text-[12px] leading-4", active ? "z-10 w-[53px] font-bold" : "w-11 pr-2")}
  >
    {active ? (
      <svg viewBox="0 0 53 17" className="absolute inset-0 h-[17px] w-[53px]" aria-hidden="true">
        <path d="M0 0l7 16.500h40L53 0z" fill="#fff" />
        <path d="M0 0l7 16.500h40L53 0" fill="none" stroke="#6e6e6e" />
      </svg>
    ) : (
      <svg viewBox="0 0 44 17" className="absolute inset-0 h-[17px] w-11 overflow-visible" aria-hidden="true">
        <path d="M-6 16.500h44L44 0" fill="none" stroke="#6e6e6e" />
      </svg>
    )}
    <span className="relative">{name}</span>
  </button>
);

const SheetTabs = () => {
  const [current, setCurrent] = useState("Лист1");
  return (
    <div className="flex h-[18px] w-[600px] shrink-0 items-start border-t border-[#6e6e6e]">
      <div className="flex gap-0.5 pr-0.5 pl-[3px]">
        {navButtons.map((b) => (
          <button
            key={b.label}
            type="button"
            aria-label={b.label}
            className="flex h-4 w-[15px] items-center justify-center rounded-[3px] border border-[#b5b5b5] bg-[#f4f4f4]"
          >
            <svg viewBox="0 0 8 8" className="size-[7px]" fill="#9a9a9a" stroke="#9a9a9a" strokeWidth=".6" aria-hidden="true">
              <path d={b.d} />
            </svg>
          </button>
        ))}
      </div>
      {["Лист1", "Лист2", "Лист3"].map((name) => (
        <SheetTab key={name} name={name} active={current === name} onClick={() => setCurrent(name)} />
      ))}
      <button type="button" aria-label="Добавить лист" className="h-[17px] w-6 shrink-0">
        <svg viewBox="0 0 24 17" className="h-[17px] w-6 overflow-visible" aria-hidden="true">
          <path d="M-6 16.500h23L24 0" fill="none" stroke="#6e6e6e" />
          <path d="M5.500 3.500h3v3h3v3h-3v3h-3v-3h-3v-3h3z" fill="#7ac52c" stroke="#3f8a12" />
        </svg>
      </button>
    </div>
  );
};

const StatusCell = ({ className, children }: { className: string; children?: ReactNode }) => (
  <div className={clsx("flex h-[18px] min-w-0 items-center border border-b-0 border-[#a0a0a0] whitespace-nowrap", className)}>
    {children}
  </div>
);

const StatusBar = () => {
  const [zoom, setZoom] = useState(100);
  return (
    <footer className="flex h-[22px] shrink-0 items-end gap-1 border-b border-[#46505c] bg-[#f0f0f0] px-[5px] text-[12px] leading-4">
      <StatusCell className="flex-[320_1_0%] pl-1">Лист 4 / 6</StatusCell>
      <StatusCell className="flex-[351_1_0%] pl-1">PageStyle_Лист1</StatusCell>
      <StatusCell className="w-[51px] shrink-0" />
      <StatusCell className="w-[44px] shrink-0 justify-center">СТАНД</StatusCell>
      <StatusCell className="w-[27px] shrink-0 justify-center"><DocAlertIcon /></StatusCell>
      <StatusCell className="w-[25px] shrink-0" />
      <StatusCell className="flex-[320_1_0%] justify-center">Сумма=0</StatusCell>
      <StatusCell className="w-[149px] shrink-0 justify-between px-1">
        <button type="button" aria-label="Уменьшить масштаб" onClick={() => setZoom(Math.max(20, zoom - 5))}>
          <svg viewBox="0 0 12 12" className="size-3" aria-hidden="true">
            <circle cx="6" cy="6" r="5.400" fill="#d8ecf8" stroke="#4a6a80" />
            <path d="M3 6h6" stroke="#174a6e" strokeWidth="1.400" />
          </svg>
        </button>
        <input
          type="range"
          aria-label="Масштаб"
          min={20}
          max={180}
          value={zoom}
          onChange={(e) => setZoom(Number(e.target.value))}
          className="h-3 w-[108px] appearance-none bg-[linear-gradient(#7d7d7d,#7d7d7d)] bg-[length:100%_1px] bg-center bg-no-repeat [&::-webkit-slider-thumb]:size-2 [&::-webkit-slider-thumb]:appearance-none [&::-webkit-slider-thumb]:rounded-full [&::-webkit-slider-thumb]:border [&::-webkit-slider-thumb]:border-[#1d3d54] [&::-webkit-slider-thumb]:bg-[#5b8dae]"
        />
        <button type="button" aria-label="Увеличить масштаб" onClick={() => setZoom(Math.min(180, zoom + 5))}>
          <svg viewBox="0 0 12 12" className="size-3" aria-hidden="true">
            <circle cx="6" cy="6" r="5.400" fill="#d8ecf8" stroke="#4a6a80" />
            <path d="M3 6h6M6 3v6" stroke="#174a6e" strokeWidth="1.400" />
          </svg>
        </button>
      </StatusCell>
      <StatusCell className="w-[38px] shrink-0 justify-center">{zoom}%</StatusCell>
    </footer>
  );
};

export default function App() {
  return (
    <div className="flex h-screen flex-col overflow-hidden bg-[#f0f0f0] font-['Open_Sans','Noto_Sans',sans-serif] text-black">
      <TitleBar />
      <MenuBar />
      <div className="shrink-0 border-b border-[#a0a0a8] bg-linear-to-b from-[#d3d9ec] from-75% to-[#e0e5f5]">
        <StandardToolbar />
        <FormattingToolbar />
      </div>
      <FormulaBar />
      <main className="flex min-h-0 flex-1">
        <div className="min-w-0 flex-1 overflow-hidden bg-white">
          <Sheet />
        </div>
        <VerticalScroll />
      </main>
      <div className="flex h-[18px] shrink-0 pr-[19px]">
        <SheetTabs />
        <div className="w-1.5 shrink-0 border border-r-2 border-[#6e6e6e] bg-white" />
        <HorizontalScroll />
      </div>
      <StatusBar />
    </div>
  );
}
